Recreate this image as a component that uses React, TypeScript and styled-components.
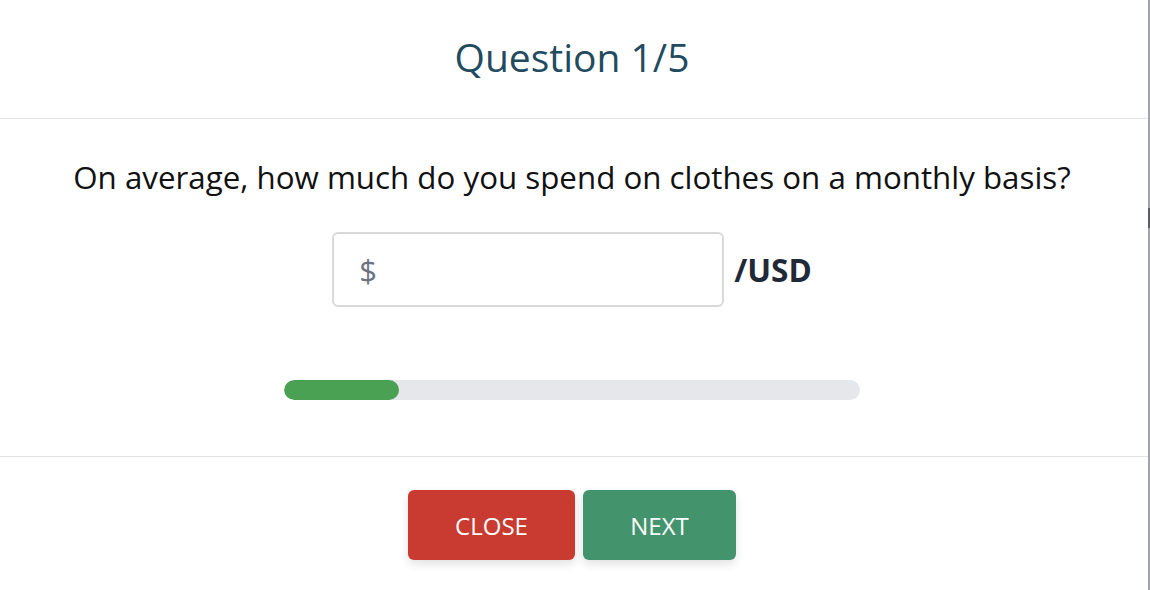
import React from "react";
import styled, { createGlobalStyle } from "styled-components";

const Global = createGlobalStyle`
  html, body { margin: 0; padding: 0; background: #ffffff; overflow: hidden; }
  body { font-family: "Open Sans", "Noto Sans", sans-serif; }
  * { box-sizing: border-box; }
`;

const Modal = styled.div`
  position: relative;
  width: 1150px;
  height: 590px;
  background: #ffffff;
  border-right: 2px solid #a3a3aa;
  display: flex;
  flex-direction: column;
`;

const ScrollMark = styled.div`
  position: absolute;
  right: -2px;
  top: 208px;
  width: 2px;
  height: 20px;
  background: #5c5c63;
`;

const Header = styled.header`
  height: 119px;
  border-bottom: 1px solid #e3e3e7;
  display: flex;
  align-items: center;
  justify-content: center;
  padding: 0 4px 6px 0;
`;

const Title = styled.h1`
  margin: 0;
  font-size: 39px;
  font-weight: 400;
  color: #234b5f;
`;

const Body = styled.section`
  height: 338px;
  border-bottom: 1px solid #e3e3e7;
  display: flex;
  flex-direction: column;
  align-items: center;
  padding: 36px 4px 0 0;
`;

const Question = styled.p`
  margin: 0;
  font-size: 31.3px;
  line-height: 44px;
  color: #111111;
`;

const InputRow = styled.div`
  display: flex;
  align-items: center;
  gap: 10px;
  margin-top: 33px;
`;

const InputBox = styled.div`
  width: 392px;
  height: 75px;
  border: 2px solid #d9d9dc;
  border-radius: 6px;
  display: flex;
  align-items: center;
  padding-left: 25px;
  font-size: 31px;
  color: #6b7280;
`;

const Unit = styled.span`
  font-size: 31.5px;
  font-weight: 700;
  color: #1f2937;
`;

const Track = styled.div`
  width: 576px;
  height: 20px;
  border-radius: 10px;
  background: #e5e7eb;
  margin-top: 73px;
  overflow: hidden;
`;

const Fill = styled.div`
  height: 100%;
  border-radius: 10px;
  background: #4ba153;
`;

const Footer = styled.footer`
  flex: 1;
  display: flex;
  justify-content: center;
  gap: 8px;
  padding: 33px 4px 0 0;
`;

const Button = styled.button<{ $bg: string; $w: number }>`
  width: ${(p) => p.$w}px;
  height: 70px;
  border: none;
  border-radius: 6px;
  background: ${(p) => p.$bg};
  color: #ffffff;
  font-family: "Open Sans", "Noto Sans", sans-serif;
  font-size: 24px;
  font-weight: 400;
  text-transform: uppercase;
  box-shadow: 0 4px 10px rgba(0, 0, 0, 0.12);
  cursor: pointer;
`;

export default function App() {
  const progress = 20;
  return (
    <>
      <Global />
      <Modal>
        <ScrollMark />
        <Header>
          <Title>Question 1/5</Title>
        </Header>
        <Body>
          <Question>On average, how much do you spend on clothes on a monthly basis?</Question>
          <InputRow>
            <InputBox>$</InputBox>
            <Unit>/USD</Unit>
          </InputRow>
          <Track>
            <Fill style={{ width: `${progress}%` }} />
          </Track>
        </Body>
        <Footer>
          <Button $bg="#c93a31" $w={167}>Close</Button>
          <Button $bg="#43946c" $w={153}>Next</Button>
        </Footer>
      </Modal>
    </>
  );
}
